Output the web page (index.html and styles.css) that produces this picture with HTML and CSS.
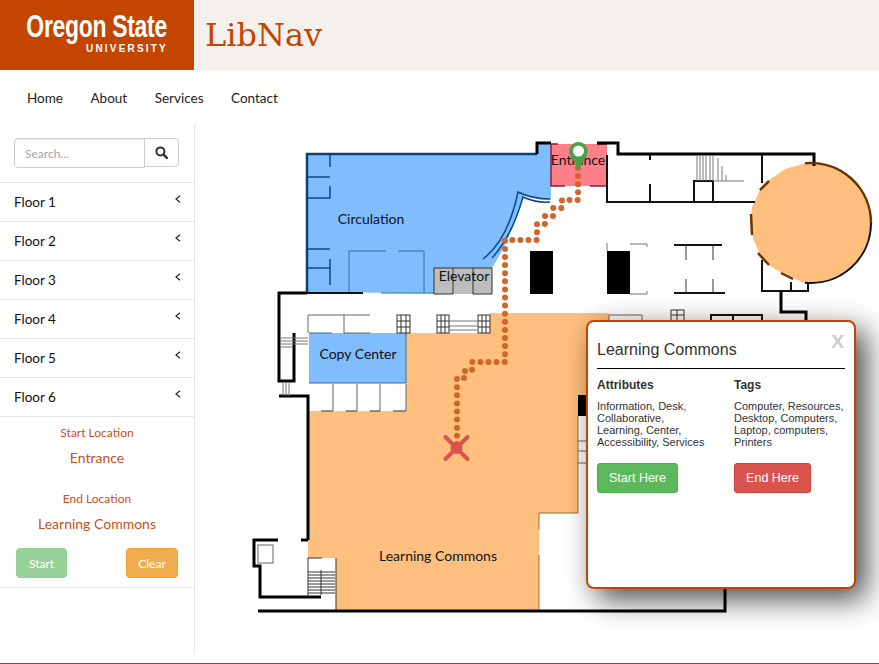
FILE: index.html
```html
<!DOCTYPE html>
<html lang="en">
<head>
  <meta charset="UTF-8">
  <meta name="viewport" content="width=device-width, initial-scale=1.0">
  <title>LibNav</title>
  <link rel="stylesheet" href="styles.css">
</head>
<body>

  <header class="top-bar">
    <div class="logo">
      <span class="logo-name">Oregon State</span>
      <span class="logo-sub">UNIVERSITY</span>
    </div>
    <h1 class="app-title">LibNav</h1>
  </header>

  <nav class="main-nav">
    <a href="#">Home</a>
    <a href="#">About</a>
    <a href="#">Services</a>
    <a href="#">Contact</a>
  </nav>

  <div class="content">
    <aside class="sidebar">
      <form class="search">
        <input class="search-input" type="text" placeholder="Search...">
        <button class="search-button" type="button" aria-label="Search">
          <svg width="13" height="13" viewBox="0 0 13 13">
            <circle class="search-glass" cx="5.4" cy="5.4" r="4"/>
            <path class="search-handle" d="M8.4 8.4 L11.8 11.8"/>
          </svg>
        </button>
      </form>

      <ul class="floors">
        <li>Floor 1<svg class="chevron" viewBox="0 0 6 8"><path d="M5 .8 L1 4 L5 7.2"/></svg></li>
        <li>Floor 2<svg class="chevron" viewBox="0 0 6 8"><path d="M5 .8 L1 4 L5 7.2"/></svg></li>
        <li>Floor 3<svg class="chevron" viewBox="0 0 6 8"><path d="M5 .8 L1 4 L5 7.2"/></svg></li>
        <li>Floor 4<svg class="chevron" viewBox="0 0 6 8"><path d="M5 .8 L1 4 L5 7.2"/></svg></li>
        <li>Floor 5<svg class="chevron" viewBox="0 0 6 8"><path d="M5 .8 L1 4 L5 7.2"/></svg></li>
        <li>Floor 6<svg class="chevron" viewBox="0 0 6 8"><path d="M5 .8 L1 4 L5 7.2"/></svg></li>
      </ul>

      <div class="route">
        <p class="route-label">Start Location</p>
        <p class="route-value">Entrance</p>
        <p class="route-label route-label-end">End Location</p>
        <p class="route-value">Learning Commons</p>
        <div class="route-buttons">
          <button class="btn-start" type="button">Start</button>
          <button class="btn-clear" type="button">Clear</button>
        </div>
      </div>
    </aside>

    <main class="map">
      <!-- viewBox uses page coordinates so the floor plan is easier to trace -->
      <svg class="floor-plan" width="684" height="530" viewBox="195 124 684 530">
        <!-- rooms -->
        <path class="room-blue" d="M307 154 H538 V144 H551 V200 Q533 198 524 195 Q510 240 492 268 V294 L307 292 Z"/>
        <rect class="room-blue" x="309" y="333" width="97" height="50"/>
        <path class="room-orange" d="M406 333 H490 V313 H609 V395 H578 V513 H539 V610 H336 V558 H308 V411 H406 Z"/>
        <rect class="room-red" x="551" y="144" width="56" height="42"/>
        <path class="room-orange" d="M805 163.300 A60 60 0 1 1 803 282.500 L782 273 L770 266 L760 255 L753 238 L751 223 L752 207 L760 190 L769 180 L785 169 Z"/>
        <rect class="room-grey" x="434" y="268" width="58" height="26"/>

        <!-- walls around the blue area -->
        <path class="wall-blue" d="M307 292 V154 H537"/>
        <path class="wall-blue-thin" d="M307 177 H330 M330 154 V167 M330 186 V198 H307 M307 249 H330 M330 259 V285 M307 268 H330"/>
        <path class="wall-blue-thin" d="M483 259 Q508 240 518 192 Q532 199 550 199 M492 258 Q512 236 523 197 Q536 203 550 202"/>
        <path class="line-blue" d="M349 293 V251 H386 M398 251 H424 V293"/>
        <path class="line-blue" d="M309 383 H406 V333 M309 333 H332"/>
        <path class="wall-mid" d="M307 293 H363"/>
        <path class="line-blue" d="M381 293 H434"/>
        <path class="wall" d="M537 154 V143 H551"/>
        <path class="line-dark" d="M434 294 H453 V268 M473 268 V294 H492 V268 H434 V294"/>

        <!-- entrance corners -->
        <path class="door-red" d="M551 144 H558 M597 144 H607 M551 144 V186 H565 M590 186 H607 V180"/>

        <!-- walls, top right -->
        <path class="wall" d="M597 143 H618 V154 H814 V166"/>
        <path class="wall-mid" d="M607 155 V202 H755 M650 154 V160 M650 184 V202 M694 202 V181 H713 V202 M762 154 V183"/>
        <path class="line-grey" d="M697 155 V181 M700 155 V181 M703 155 V181 M706 155 V181 M710 155 V181 M713 155 V181 M718 158 V181 M722 166 V181 M726 175 V181 M713 181 H744"/>
        <path class="wall-brown" d="M805 163.300 A60 60 0 0 1 871 223"/>
        <path class="wall-thin" d="M871 223 A60 60 0 0 1 805 282.700"/>
        <path class="wall-brown" d="M760 190 L769 181 M751 214 L752 235 M758 253 L769 265 M781 273 L793 279"/>

        <!-- shelves and tables -->
        <rect class="shelf" x="530" y="251" width="23" height="43"/>
        <rect class="shelf" x="607" y="251" width="23" height="43"/>
        <path class="line-grey" d="M607 243 V251 M630 244 H647 V247 M630 294 H647 V291"/>
        <path class="wall-mid" d="M674 245 H722 M674 293 H725"/>
        <path class="line-dark" d="M686 245 V260 M713 245 V260 M686 279 V293 M713 279 V293"/>
        <path class="wall-mid" d="M762 260 V291 H808 V282 M791 282 V291"/>
        <path class="wall" d="M781 291 V312 H806 V322"/>

        <!-- lobby and stairs, left side -->
        <path class="wall" d="M307 293 H279 V381 H294 V333"/>
        <path class="wall" d="M279 396 H308 V540 M301 540 H308"/>
        <path class="line-grey" d="M281 338 H308 M281 341 H308 M281 344 H308 M281 347 H293 M283 383 V396 M286 383 V396 M289 383 V396"/>
        <path class="line-room" d="M308 333 V315 H370 M344 333 V315 M344 333 H370"/>
        <path class="line-room" d="M406 384 V411 M333 384 V411 M357 384 V411 M380 384 V411"/>
        <path class="line-dark" d="M321 411 H333 M346 411 H357 M370 411 H380 M393 411 H406"/>
        <path class="line-grey" d="M449 321 H477 M449 326 H477 M449 330 H477"/>
        <g class="window">
          <rect x="397" y="315" width="13" height="18"/>
          <path d="M397 321 H410 M397 327 H410 M401 315 V333 M406 315 V333"/>
          <rect x="437" y="315" width="12" height="18"/>
          <path d="M437 321 H449 M437 327 H449 M441 315 V333 M445 315 V333"/>
          <rect x="478" y="315" width="12" height="18"/>
          <path d="M478 321 H490 M478 327 H490 M482 315 V333 M486 315 V333"/>
          <rect x="671" y="310" width="13" height="12"/>
          <path d="M671 315 H684 M677 310 V322"/>
        </g>
        <path class="line-room" d="M609 322 V315 H642 V322"/>
        <path class="wall-mid" d="M711 322 V315 H762 V322 M733 315 V322"/>

        <!-- lower rooms -->
        <path class="wall" d="M278 540 H254 V566 H260 V597 H321"/>
        <rect class="line-room" x="258" y="545" width="15" height="18"/>
        <path class="line-dark" d="M308 597 V558 H322 M336 558 V610 M308 572 H335 M308 575 H335 M308 578 H335 M308 581 H335 M308 584 H335 M308 587 H335 M308 590 H335 M308 593 H335 M321 570 V595"/>
        <path class="wall" d="M258 611 H725 V588"/>
        <path class="line-brown" d="M539 610 V555 M539 530 V513 H578 M578 416 V513"/>
        <rect class="shelf" x="578" y="395" width="9" height="21"/>
        <path class="line-room" d="M578 441 H587 M578 451 H587 M578 463 H587"/>

        <!-- room names -->
        <text class="room-name" x="371" y="224" text-anchor="middle">Circulation</text>
        <text class="room-name" x="464" y="281" text-anchor="middle">Elevator</text>
        <text class="room-name" x="578" y="165" text-anchor="middle">Entrance</text>
        <text class="room-name" x="358" y="359" text-anchor="middle">Copy Center</text>
        <text class="room-name" x="438" y="561" text-anchor="middle">Learning Commons</text>

        <!-- route -->
        <path class="route-dots" d="M578 168 V200 H562 V208 H553 V216 H545 V224 H537 V240 H505 V362 H472 V370 H465 V378 H457 V446"/>
        <path class="end-mark" d="M445.500 437 L467.500 459 M467.500 437 L445.500 459"/>
        <circle class="end-dot" cx="456.500" cy="448" r="6"/>
        <path class="pin" d="M578.500 170 L570.500 156 A9.300 9.300 0 1 1 586.500 156 Z"/>
        <circle class="pin-hole" cx="578.500" cy="151" r="5.500"/>
      </svg>

      <section class="popup">
        <span class="popup-close">X</span>
        <h2 class="popup-title">Learning Commons</h2>
        <div class="popup-columns">
          <div class="popup-column">
            <h3>Attributes</h3>
            <p class="popup-attributes">Information, Desk, Collaborative, Learning, Center, Accessibility, Services</p>
            <button class="btn-here btn-here-start" type="button">Start Here</button>
          </div>
          <div class="popup-column">
            <h3>Tags</h3>
            <p>Computer, Resources, Desktop, Computers, Laptop, computers, Printers</p>
            <button class="btn-here btn-here-end" type="button">End Here</button>
          </div>
        </div>
      </section>
    </main>
  </div>

  <div class="bottom-line"></div>

</body>
</html>
```

FILE: styles.css
```css
* {
  margin: 0;
  padding: 0;
  box-sizing: border-box;
}

html, body {
  height: 664px;
  overflow: hidden;
}

body {
  background-color: #fff;
  font-family: 'Lato', sans-serif;
  color: #111;
}

.top-bar {
  display: flex;
  align-items: center;
  height: 70px;
  background-color: #f4f1ed;
}

.logo {
  flex: none;
  display: flex;
  flex-direction: column;
  align-items: flex-end;
  width: 194px;
  height: 70px;
  padding: 10px 27px 0 0;
  background-color: #c34500;
  color: #fff;
  font-weight: bold;
  overflow: hidden;
}

/* no condensed family is installed, so squeeze the regular one */
.logo-name {
  font-family: 'Liberation Sans', sans-serif;
  font-size: 31px;
  line-height: 34px;
  letter-spacing: -0.4px;
  white-space: nowrap;
  transform: scaleX(0.74);
  transform-origin: right center;
}

.logo-sub {
  font-family: 'Liberation Sans', sans-serif;
  font-size: 10px;
  line-height: 9px;
  letter-spacing: 2.2px;
  margin-right: -1px;
}

.app-title {
  margin-left: 11px;
  font-family: 'DejaVu Serif', serif;
  font-size: 32px;
  font-weight: normal;
  color: #c34500;
}

.main-nav {
  display: flex;
  gap: 27.5px;
  height: 54px;
  padding: 20px 0 0 27px;
}

.main-nav a {
  color: #222;
  font-size: 13.5px;
  line-height: 17px;
  text-decoration: none;
}

.content {
  display: flex;
  height: 530px;
}

.sidebar {
  flex: none;
  width: 195px;
  border-right: 1px solid #e7e7e7;
}

.search {
  display: flex;
  height: 58px;
  padding: 14px 15px 14px 14px;
}

.search-input {
  width: 131px;
  height: 30px;
  padding: 0 10px;
  border: 1px solid #ccc;
  border-radius: 4px 0 0 4px;
  font-family: inherit;
  font-size: 12px;
  box-shadow: inset 0 1px 1px rgba(0, 0, 0, 0.08);
}

.search-input::placeholder {
  color: #a5a5a5;
}

.search-button {
  display: flex;
  align-items: center;
  justify-content: center;
  width: 34px;
  height: 29px;
  border: 1px solid #ccc;
  border-left: none;
  border-radius: 0 4px 4px 0;
  background-color: #fff;
}

.search-glass,
.search-handle {
  fill: none;
  stroke: #333;
  stroke-width: 2;
}

.search-handle {
  stroke-width: 2.4;
  stroke-linecap: round;
}

.floors {
  list-style: none;
  border-top: 1px solid #e7e7e7;
}

.floors li {
  position: relative;
  height: 39px;
  padding-left: 14px;
  border-bottom: 1px solid #e7e7e7;
  font-size: 13.5px;
  line-height: 38px;
}

.chevron {
  position: absolute;
  top: 12px;
  right: 13px;
  width: 6px;
  height: 8px;
  fill: none;
  stroke: #222;
  stroke-width: 1.2;
}

.route {
  height: 171px;
  padding-top: 8px;
  border-bottom: 1px solid #e7e7e7;
  color: #c8501c;
  text-align: center;
}

.route-label {
  font-size: 12px;
  line-height: 15px;
}

.route-label-end {
  margin-top: 25px;
}

.route-value {
  margin-top: 9px;
  font-size: 14px;
  line-height: 17px;
}

.route-buttons {
  display: flex;
  justify-content: space-between;
  margin-top: 16px;
  padding: 0 16px;
}

.route-buttons button {
  height: 30px;
  border-radius: 4px;
  color: #fff;
  font-family: inherit;
  font-size: 12px;
}

.btn-start {
  width: 51px;
  border: 1px solid #95d095;
  background-color: #97d197;
}

.btn-clear {
  width: 52px;
  border: 1px solid #eea236;
  background-color: #f0ad4e;
}

.map {
  position: relative;
  flex: 1;
}

.floor-plan {
  display: block;
}

.room-blue { fill: #80bdff; }
.room-orange { fill: #ffc07f; }
.room-red { fill: #ff8088; }
.room-grey { fill: #bdbdbd; }
.shelf { fill: #000; }

.wall,
.wall-mid,
.wall-thin,
.wall-brown,
.wall-blue,
.wall-blue-thin,
.door-red,
.line-blue,
.line-dark,
.line-grey,
.line-room,
.line-brown {
  fill: none;
}

.wall { stroke: #000; stroke-width: 3; }
.wall-mid { stroke: #111; stroke-width: 2; }
.wall-thin { stroke: #111; stroke-width: 2; }
.wall-brown { stroke: #6b3600; stroke-width: 2.5; }
.wall-blue { stroke: #0d3f73; stroke-width: 2.5; }
.wall-blue-thin { stroke: #0d4a85; stroke-width: 1.5; }
.door-red { stroke: #8a2036; stroke-width: 1.5; }
.line-blue { stroke: #2f6ca8; stroke-width: 1; }
.line-dark { stroke: #333; stroke-width: 1; }
.line-grey { stroke: #777; stroke-width: 1; }
.line-room { stroke: #666; stroke-width: 1; }
.line-brown { stroke: #9a6a38; stroke-width: 1; }

.window {
  fill: none;
  stroke: #333;
  stroke-width: 1;
}

.room-name {
  fill: #111;
  font-family: 'Lato', sans-serif;
  font-size: 14px;
}

.route-dots {
  fill: none;
  stroke: #d2652c;
  stroke-width: 6;
  stroke-linecap: round;
  stroke-dasharray: 0 8.1;
}

.end-mark {
  stroke: #d9534f;
  stroke-width: 4;
  stroke-linecap: round;
}

.end-dot { fill: #d9534f; }
.pin { fill: #4a9f4a; }
.pin-hole { fill: #fff; }

.popup {
  position: absolute;
  top: 196px;
  left: 391px;
  width: 270px;
  height: 269px;
  padding: 18px 9px 0;
  border: 2px solid #c34500;
  border-radius: 8px;
  background-color: #fff;
  box-shadow: 10px 10px 30px rgba(0, 0, 0, 0.72);
  font-family: 'Liberation Sans', sans-serif;
  color: #333;
}

.popup-close {
  position: absolute;
  top: 9px;
  right: 10px;
  color: #ccc;
  font-size: 19px;
  font-weight: bold;
}

.popup-title {
  height: 29px;
  border-bottom: 1px solid #000;
  font-size: 16px;
  font-weight: normal;
  line-height: 20px;
}

.popup-columns {
  display: grid;
  grid-template-columns: 137px 1fr;
  padding-top: 9px;
}

.popup-column h3 {
  font-size: 12px;
  line-height: 15px;
}

.popup-column p {
  height: 48px;
  margin: 7px 0 15px;
  font-size: 11px;
  line-height: 12px;
}

.popup-column .popup-attributes {
  width: 112px;
}

.btn-here {
  height: 30px;
  border-radius: 3px;
  color: #fff;
  font-family: inherit;
  font-size: 12.5px;
}

.btn-here-start {
  width: 81px;
  border: 1px solid #4cae4c;
  background-color: #5cb85c;
}

.btn-here-end {
  width: 77px;
  border: 1px solid #d43f3a;
  background-color: #d9534f;
}

.bottom-line {
  height: 1px;
  margin-top: 9px;
  background-color: #a9441a;
}
```
